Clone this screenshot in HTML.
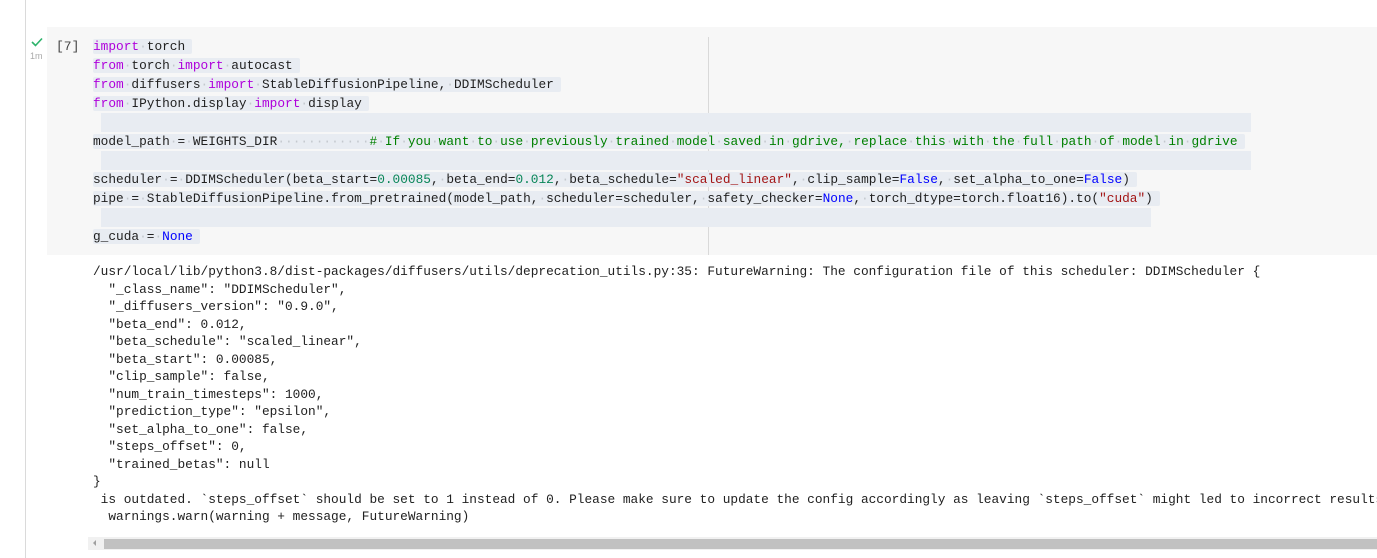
<!DOCTYPE html>
<html><head><meta charset="utf-8"><style>
body{margin:0;width:1377px;height:558px;background:#fff;position:relative;overflow:hidden;font-family:"Liberation Mono",monospace;}
.vl{position:absolute;left:25px;top:0;width:1px;height:558px;background:#dadada;}
.cell{position:absolute;left:47px;top:27px;width:1330px;height:228px;background:#f7f7f7;}
.ruler{position:absolute;left:708px;top:37px;width:1px;height:218px;background:#d9d9d9;}
.code{position:absolute;left:93px;top:37px;font-size:12.8px;line-height:19px;white-space:pre;color:#1f1f1f;}
.code div{height:19px;}
.h{background:#e8ecf2;padding-right:7px;border-radius:2px;}
.e{display:inline-block;margin-left:8px;height:19px;background:#e8ecf2;vertical-align:top;}
.d{color:#c4c8ce;}
.k{color:#af00db;}.n{color:#098658;}.b{color:#0000ff;}.s{color:#a31515;}.c{color:#008000;}
.out{position:absolute;left:93px;top:263px;font-size:12.8px;line-height:17.5px;white-space:pre;color:#212121;}
.check{position:absolute;left:31px;top:37px;}
.t{position:absolute;left:30px;top:51px;font-family:"Liberation Sans",sans-serif;font-size:9px;color:#aaa;}
.num{position:absolute;left:56px;top:37px;font-size:13px;line-height:19px;color:#444;}
.sb{position:absolute;left:88px;top:537px;width:1289px;height:13px;background:#f1f1f1;}
.th{position:absolute;left:104px;top:539px;width:1273px;height:10px;background:#c1c1c1;}
.ar{position:absolute;left:93px;top:540px;width:0;height:0;border-top:3px solid transparent;border-bottom:3px solid transparent;border-right:3px solid #a0a0a0;}
</style></head><body>
<div class="vl"></div>
<div class="cell"></div>
<div class="ruler"></div>
<svg class="check" width="12" height="10" viewBox="0 0 12 10"><path d="M1 5 L4.5 8.5 L11 1.5" fill="none" stroke="#2db36b" stroke-width="1.6"/></svg>
<div class="t">1m</div>
<div class="num">[7]</div>
<div class="code"><div><span class="h"><span class="k">import</span><span class="d">·</span>torch</span></div><div><span class="h"><span class="k">from</span><span class="d">·</span>torch<span class="d">·</span><span class="k">import</span><span class="d">·</span>autocast</span></div><div><span class="h"><span class="k">from</span><span class="d">·</span>diffusers<span class="d">·</span><span class="k">import</span><span class="d">·</span>StableDiffusionPipeline,<span class="d">·</span>DDIMScheduler</span></div><div><span class="h"><span class="k">from</span><span class="d">·</span>IPython.display<span class="d">·</span><span class="k">import</span><span class="d">·</span>display</span></div><div><span class="e" style="width:1150px"></span></div><div><span class="h">model_path<span class="d">·</span>=<span class="d">·</span>WEIGHTS_DIR<span class="d">············</span><span class="c">#<span class="d">·</span>If<span class="d">·</span>you<span class="d">·</span>want<span class="d">·</span>to<span class="d">·</span>use<span class="d">·</span>previously<span class="d">·</span>trained<span class="d">·</span>model<span class="d">·</span>saved<span class="d">·</span>in<span class="d">·</span>gdrive,<span class="d">·</span>replace<span class="d">·</span>this<span class="d">·</span>with<span class="d">·</span>the<span class="d">·</span>full<span class="d">·</span>path<span class="d">·</span>of<span class="d">·</span>model<span class="d">·</span>in<span class="d">·</span>gdrive</span></span></div><div><span class="e" style="width:1150px"></span></div><div><span class="h">scheduler<span class="d">·</span>=<span class="d">·</span>DDIMScheduler(beta_start=<span class="n">0.00085</span>,<span class="d">·</span>beta_end=<span class="n">0.012</span>,<span class="d">·</span>beta_schedule=<span class="s">"scaled_linear"</span>,<span class="d">·</span>clip_sample=<span class="b">False</span>,<span class="d">·</span>set_alpha_to_one=<span class="b">False</span>)</span></div><div><span class="h">pipe<span class="d">·</span>=<span class="d">·</span>StableDiffusionPipeline.from_pretrained(model_path,<span class="d">·</span>scheduler=scheduler,<span class="d">·</span>safety_checker=<span class="b">None</span>,<span class="d">·</span>torch_dtype=torch.float16).to(<span class="s">"cuda"</span>)</span></div><div><span class="e" style="width:1050px"></span></div><div><span class="h">g_cuda<span class="d">·</span>=<span class="d">·</span><span class="b">None</span></span></div></div>
<div class="out">/usr/local/lib/python3.8/dist-packages/diffusers/utils/deprecation_utils.py:35: FutureWarning: The configuration file of this scheduler: DDIMScheduler {
  "_class_name": "DDIMScheduler",
  "_diffusers_version": "0.9.0",
  "beta_end": 0.012,
  "beta_schedule": "scaled_linear",
  "beta_start": 0.00085,
  "clip_sample": false,
  "num_train_timesteps": 1000,
  "prediction_type": "epsilon",
  "set_alpha_to_one": false,
  "steps_offset": 0,
  "trained_betas": null
}
 is outdated. `steps_offset` should be set to 1 instead of 0. Please make sure to update the config accordingly as leaving `steps_offset` might led to incorrect results
  warnings.warn(warning + message, FutureWarning)</div>
<div class="sb"></div><div class="th"></div><div class="ar"></div>
</body></html>
